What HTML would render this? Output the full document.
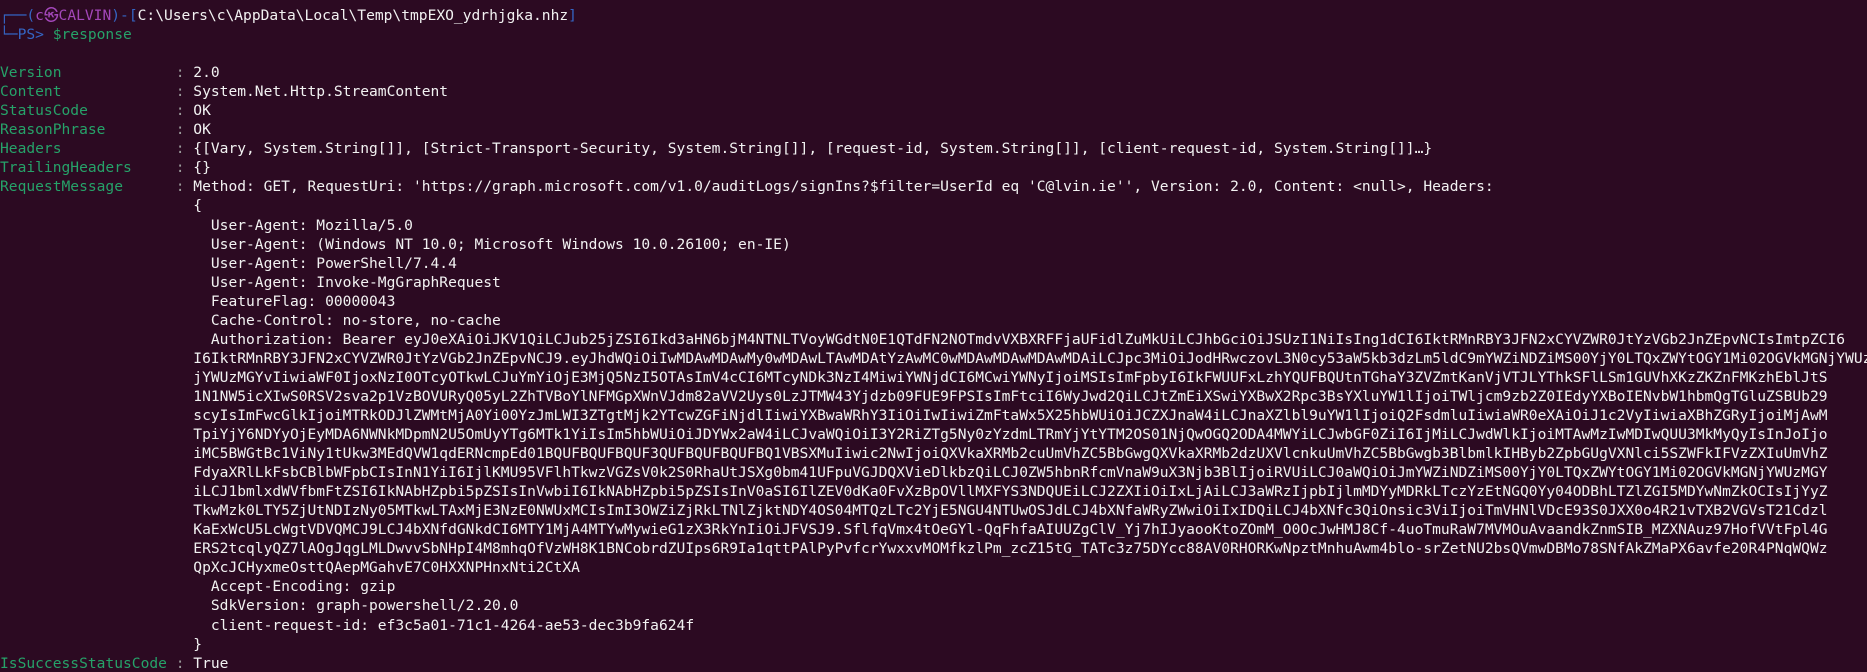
<!DOCTYPE html>
<html><head><meta charset="utf-8"><style>
html,body{margin:0;padding:0;background:#2c0a22;width:1867px;height:672px;overflow:hidden}
pre{margin:0;padding:6px 0 0 0;font-family:"DejaVu Sans Mono","Liberation Mono",monospace;font-size:14.6px;line-height:19.05px;color:#f2f2f2;white-space:pre;overflow:hidden}
.g{color:#26a269}.b{color:#3465c4}.p{color:#a347ba}.gr{color:#9a9a9a}
</style></head><body><pre><span class="b">┌──(</span><span class="p">c㉿CALVIN</span><span class="b">)-[</span>C:\Users\c\AppData\Local\Temp\tmpEXO_ydrhjgka.nhz<span class="b">]</span>
<span class="b">└─PS&gt; </span><span class="g">$response</span>

<span class="g">Version            </span><span class="gr"> : </span>2.0
<span class="g">Content            </span><span class="gr"> : </span>System.Net.Http.StreamContent
<span class="g">StatusCode         </span><span class="gr"> : </span>OK
<span class="g">ReasonPhrase       </span><span class="gr"> : </span>OK
<span class="g">Headers            </span><span class="gr"> : </span>{[Vary, System.String[]], [Strict-Transport-Security, System.String[]], [request-id, System.String[]], [client-request-id, System.String[]]…}
<span class="g">TrailingHeaders    </span><span class="gr"> : </span>{}
<span class="g">RequestMessage     </span><span class="gr"> : </span>Method: GET, RequestUri: 'https://graph.microsoft.com/v1.0/auditLogs/signIns?$filter=UserId eq 'C@lvin.ie'', Version: 2.0, Content: &lt;null&gt;, Headers:
                      {
                        User-Agent: Mozilla/5.0
                        User-Agent: (Windows NT 10.0; Microsoft Windows 10.0.26100; en-IE)
                        User-Agent: PowerShell/7.4.4
                        User-Agent: Invoke-MgGraphRequest
                        FeatureFlag: 00000043
                        Cache-Control: no-store, no-cache
                        Authorization: Bearer eyJ0eXAiOiJKV1QiLCJub25jZSI6Ikd3aHN6bjM4NTNLTVoyWGdtN0E1QTdFN2NOTmdvVXBXRFFjaUFidlZuMkUiLCJhbGciOiJSUzI1NiIsIng1dCI6IktRMnRBY3JFN2xCYVZWR0JtYzVGb2JnZEpvNCIsImtpZCI6
                      I6IktRMnRBY3JFN2xCYVZWR0JtYzVGb2JnZEpvNCJ9.eyJhdWQiOiIwMDAwMDAwMy0wMDAwLTAwMDAtYzAwMC0wMDAwMDAwMDAwMDAiLCJpc3MiOiJodHRwczovL3N0cy53aW5kb3dzLm5ldC9mYWZiNDZiMS00YjY0LTQxZWYtOGY1Mi02OGVkMGNjYWUz
                      jYWUzMGYvIiwiaWF0IjoxNzI0OTcyOTkwLCJuYmYiOjE3MjQ5NzI5OTAsImV4cCI6MTcyNDk3NzI4MiwiYWNjdCI6MCwiYWNyIjoiMSIsImFpbyI6IkFWUUFxLzhYQUFBQUtnTGhaY3ZVZmtKanVjVTJLYThkSFlLSm1GUVhXKzZKZnFMKzhEblJtS
                      1N1NW5icXIwS0RSV2sva2p1VzBOVURyQ05yL2ZhTVBoYlNFMGpXWnVJdm82aVV2Uys0LzJTMW43Yjdzb09FUE9FPSIsImFtciI6WyJwd2QiLCJtZmEiXSwiYXBwX2Rpc3BsYXluYW1lIjoiTWljcm9zb2Z0IEdyYXBoIENvbW1hbmQgTGluZSBUb29
                      scyIsImFwcGlkIjoiMTRkODJlZWMtMjA0Yi00YzJmLWI3ZTgtMjk2YTcwZGFiNjdlIiwiYXBwaWRhY3IiOiIwIiwiZmFtaWx5X25hbWUiOiJCZXJnaW4iLCJnaXZlbl9uYW1lIjoiQ2FsdmluIiwiaWR0eXAiOiJ1c2VyIiwiaXBhZGRyIjoiMjAwM
                      TpiYjY6NDYyOjEyMDA6NWNkMDpmN2U5OmUyYTg6MTk1YiIsIm5hbWUiOiJDYWx2aW4iLCJvaWQiOiI3Y2RiZTg5Ny0zYzdmLTRmYjYtYTM2OS01NjQwOGQ2ODA4MWYiLCJwbGF0ZiI6IjMiLCJwdWlkIjoiMTAwMzIwMDIwQUU3MkMyQyIsInJoIjo
                      iMC5BWGtBc1ViNy1tUkw3MEdQVW1qdERNcmpEd01BQUFBQUFBQUF3QUFBQUFBQUFBQ1VBSXMuIiwic2NwIjoiQXVkaXRMb2cuUmVhZC5BbGwgQXVkaXRMb2dzUXVlcnkuUmVhZC5BbGwgb3BlbmlkIHByb2ZpbGUgVXNlci5SZWFkIFVzZXIuUmVhZ
                      FdyaXRlLkFsbCBlbWFpbCIsInN1YiI6IjlKMU95VFlhTkwzVGZsV0k2S0RhaUtJSXg0bm41UFpuVGJDQXVieDlkbzQiLCJ0ZW5hbnRfcmVnaW9uX3Njb3BlIjoiRVUiLCJ0aWQiOiJmYWZiNDZiMS00YjY0LTQxZWYtOGY1Mi02OGVkMGNjYWUzMGY
                      iLCJ1bmlxdWVfbmFtZSI6IkNAbHZpbi5pZSIsInVwbiI6IkNAbHZpbi5pZSIsInV0aSI6IlZEV0dKa0FvXzBpOVllMXFYS3NDQUEiLCJ2ZXIiOiIxLjAiLCJ3aWRzIjpbIjlmMDYyMDRkLTczYzEtNGQ0Yy04ODBhLTZlZGI5MDYwNmZkOCIsIjYyZ
                      TkwMzk0LTY5ZjUtNDIzNy05MTkwLTAxMjE3NzE0NWUxMCIsImI3OWZiZjRkLTNlZjktNDY4OS04MTQzLTc2YjE5NGU4NTUwOSJdLCJ4bXNfaWRyZWwiOiIxIDQiLCJ4bXNfc3QiOnsic3ViIjoiTmVHNlVDcE93S0JXX0o4R21vTXB2VGVsT21Cdzl
                      KaExWcU5LcWgtVDVQMCJ9LCJ4bXNfdGNkdCI6MTY1MjA4MTYwMywieG1zX3RkYnIiOiJFVSJ9.SflfqVmx4tOeGYl-QqFhfaAIUUZgClV_Yj7hIJyaooKtoZOmM_O0OcJwHMJ8Cf-4uoTmuRaW7MVMOuAvaandkZnmSIB_MZXNAuz97HofVVtFpl4G
                      ERS2tcqlyQZ7lAOgJqgLMLDwvvSbNHpI4M8mhqOfVzWH8K1BNCobrdZUIps6R9Ia1qttPAlPyPvfcrYwxxvMOMfkzlPm_zcZ15tG_TATc3z75DYcc88AV0RHORKwNpztMnhuAwm4blo-srZetNU2bsQVmwDBMo78SNfAkZMaPX6avfe20R4PNqWQWz
                      QpXcJCHyxmeOsttQAepMGahvE7C0HXXNPHnxNti2CtXA
                        Accept-Encoding: gzip
                        SdkVersion: graph-powershell/2.20.0
                        client-request-id: ef3c5a01-71c1-4264-ae53-dec3b9fa624f
                      }
<span class="g">IsSuccessStatusCode</span><span class="gr"> : </span>True
</pre></body></html>
